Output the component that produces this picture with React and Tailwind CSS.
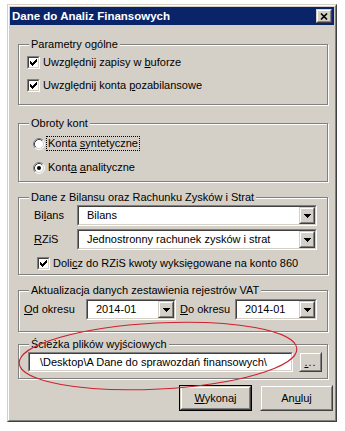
function U({ children }) {
  return <span className="underline">{children}</span>
}

function Raised({ className = '', children }) {
  return (
    <div className={`border border-t-[#d4d0c8] border-l-[#d4d0c8] border-r-[#404040] border-b-[#404040] ${className}`}>
      <div className="h-full w-full border border-t-white border-l-white border-r-[#808080] border-b-[#808080] bg-[#d4d0c8] flex items-center justify-center">
        {children}
      </div>
    </div>
  )
}

function Sunken({ className = '', inner = '', children }) {
  return (
    <div className={`border border-t-[#808080] border-l-[#808080] border-r-white border-b-white ${className}`}>
      <div className={`h-full w-full border border-t-[#404040] border-l-[#404040] border-r-[#d4d0c8] border-b-[#d4d0c8] bg-white ${inner}`}>
        {children}
      </div>
    </div>
  )
}

function Arrow() {
  return (
    <svg width="7" height="4" viewBox="0 0 7 4" shapeRendering="crispEdges">
      <path d="M0 0h7v1h-1v1h-1v1h-1v1h-1v-1h-1v-1h-1v-1h-1z" fill="#000" />
    </svg>
  )
}

function Combo({ value, className = '' }) {
  return (
    <Sunken className={`h-[21px] ${className}`} inner="flex items-center">
      <span className="flex-1 pl-[8px] leading-[13px] whitespace-nowrap overflow-hidden">{value}</span>
      <Raised className="w-[16px] h-full">
        <Arrow />
      </Raised>
    </Sunken>
  )
}

function Check({ checked }) {
  return (
    <Sunken className="w-[13px] h-[13px] shrink-0" inner="flex items-center justify-center">
      {checked && (
        <svg width="7" height="7" viewBox="0 0 7 7" shapeRendering="crispEdges">
          <path d="M6 0h1v3h-1v1h-1v1h-1v1h-1v1h-1v-1h-1v-1h-1v-3h1v1h1v1h1v-1h1v-1h1v-1h1z" fill="#000" />
        </svg>
      )}
    </Sunken>
  )
}

function Radio({ checked }) {
  return (
    <svg width="12" height="12" viewBox="0 0 12 12" className="shrink-0">
      <circle cx="6" cy="6" r="5" fill="#fff" />
      <path d="M9.89 2.11 A5.5 5.5 0 0 0 2.11 9.89" stroke="#808080" fill="none" />
      <path d="M9.89 2.11 A5.5 5.5 0 0 1 2.11 9.89" stroke="#fff" fill="none" />
      <path d="M9.18 2.82 A4.5 4.5 0 0 0 2.82 9.18" stroke="#404040" fill="none" />
      <path d="M9.18 2.82 A4.5 4.5 0 0 1 2.82 9.18" stroke="#d4d0c8" fill="none" />
      {checked && <circle cx="6" cy="6" r="2" fill="#000" />}
    </svg>
  )
}

function Group({ title, className = '', children }) {
  return (
    <div className={`relative ml-[8px] w-[310px] border border-[#808080] shadow-[inset_1px_1px_0_#fff,1px_1px_0_#fff] ${className}`}>
      <span className="absolute left-[10px] top-[-8px] bg-[#d4d0c8] px-[2px] leading-[14px] whitespace-nowrap">
        {title}
      </span>
      {children}
    </div>
  )
}

function Button({ children, isDefault }) {
  const body = (
    <Raised className="w-full h-full">
      <span className="leading-[13px]">{children}</span>
    </Raised>
  )
  if (isDefault) {
    return <div className="w-[73px] h-[26px] border border-black">{body}</div>
  }
  return <div className="w-[73px] h-[26px]">{body}</div>
}

export default function App() {
  return (
    <div className="relative w-[345px] h-[431px] bg-white pl-[7px] pt-[4px] font-['Liberation_Sans',Arial,sans-serif] text-[11px] text-black">
      <div className="w-[330px] h-[418px] border border-t-[#d4d0c8] border-l-[#d4d0c8] border-r-[#404040] border-b-[#404040]">
        <div className="h-full border border-t-white border-l-white border-r-[#808080] border-b-[#808080] bg-[#d4d0c8] p-[1px]">
          {/* Title bar */}
          <div className="h-[18px] bg-[#0a246a] flex items-center justify-between pl-[2px] pr-[2px]">
            <span className="text-white font-bold text-[11.5px] leading-[14px]">Dane do Analiz Finansowych</span>
            <Raised className="w-[16px] h-[14px]">
              <svg width="8" height="7" viewBox="0 0 8 7">
                <path d="M1 0.5 L7 6.5 M7 0.5 L1 6.5" stroke="#000" strokeWidth="1.6" />
              </svg>
            </Raised>
          </div>

          {/* Parametry ogólne */}
          <Group title="Parametry ogólne" className="mt-[19px] h-[61px]">
            <div className="flex flex-col gap-[6px] pt-[9px] pl-[8px]">
              <div className="h-[17px] flex items-center gap-[2px]">
                <Check checked />
                <span className="pl-[1px]">Uwzględnij zapisy w <U>b</U>uforze</span>
              </div>
              <div className="h-[17px] flex items-center gap-[2px]">
                <Check checked />
                <span className="pl-[1px]">Uwzględnij konta <U>p</U>ozabilansowe</span>
              </div>
            </div>
          </Group>

          {/* Obroty kont */}
          <Group title="Obroty kont" className="mt-[18px] h-[59px]">
            <div className="flex flex-col gap-[7px] pt-[11px] pl-[14px]">
              <div className="h-[17px] flex items-center gap-[1px]">
                <Radio />
                <span className="border border-dotted border-black px-[1px] leading-[13px]">
                  Konta <U>s</U>yntetyczne
                </span>
              </div>
              <div className="h-[17px] flex items-center gap-[2px]">
                <Radio checked />
                <span className="pl-[1px]">Kont<U>a</U> <U>a</U>nalityczne</span>
              </div>
            </div>
          </Group>

          {/* Dane z Bilansu */}
          <Group title="Dane z Bilansu oraz Rachunku Zysków i Strat" className="mt-[15px] h-[78px]">
            <div className="flex flex-col pt-[7px]">
              <div className="flex items-start">
                <span className="w-[58px] pl-[15px] pt-[2px]">Bi<U>l</U>ans</span>
                <Combo value="Bilans" className="w-[240px]" />
              </div>
              <div className="flex items-start mt-[3px]">
                <span className="w-[58px] pl-[15px] pt-[2px]"><U>R</U>ZiS</span>
                <Combo value="Jednostronny rachunek zysków i strat" className="w-[240px]" />
              </div>
              <div className="h-[17px] mt-[5px] flex items-center gap-[2px] pl-[18px]">
                <Check checked />
                <span className="pl-[1px]">Doli<U>c</U>z do RZiS kwoty wyksięgowane na konto 860</span>
              </div>
            </div>
          </Group>

          {/* Aktualizacja */}
          <Group title="Aktualizacja danych zestawienia rejestrów VAT" className="mt-[15px] h-[42px]">
            <div className="flex items-start pt-[8px] pl-[5px]">
              <span className="w-[62px] pt-[2px]"><U>O</U>d okresu</span>
              <Combo value="2014-01" className="w-[90px]" />
              <span className="w-[59px] pl-[4px] pt-[2px]"><U>D</U>o okresu</span>
              <Combo value="2014-01" className="w-[82px]" />
            </div>
          </Group>

          {/* Ścieżka */}
          <Group title="Ścieżka plików wyjściowych" className="mt-[12px] h-[35px]">
            <div className="flex items-center pt-[7px] pl-[9px] gap-[6px]">
              <Sunken className="w-[265px] h-[20px]" inner="flex items-center">
                <span className="pl-[10px] whitespace-nowrap">\Desktop\A Dane do sprawozdań finansowych\</span>
              </Sunken>
              <Raised className="w-[23px] h-[20px]">
                <span className="leading-[10px] tracking-[1px]"><U>.</U>..</span>
              </Raised>
            </div>
          </Group>

          {/* Buttons */}
          <div className="mt-[6px] flex justify-end gap-[8px] pr-[1px]">
            <Button isDefault><U>W</U>ykonaj</Button>
            <Button>An<U>u</U>luj</Button>
          </div>
        </div>
      </div>

      {/* red annotation ellipse */}
      <svg className="absolute left-0 top-0 pointer-events-none" width="345" height="431" viewBox="0 0 345 431">
        <ellipse cx="158" cy="356" rx="139" ry="33" transform="rotate(-3 158 356)" fill="none" stroke="#d0202e" strokeWidth="1.1" />
      </svg>
    </div>
  )
}
